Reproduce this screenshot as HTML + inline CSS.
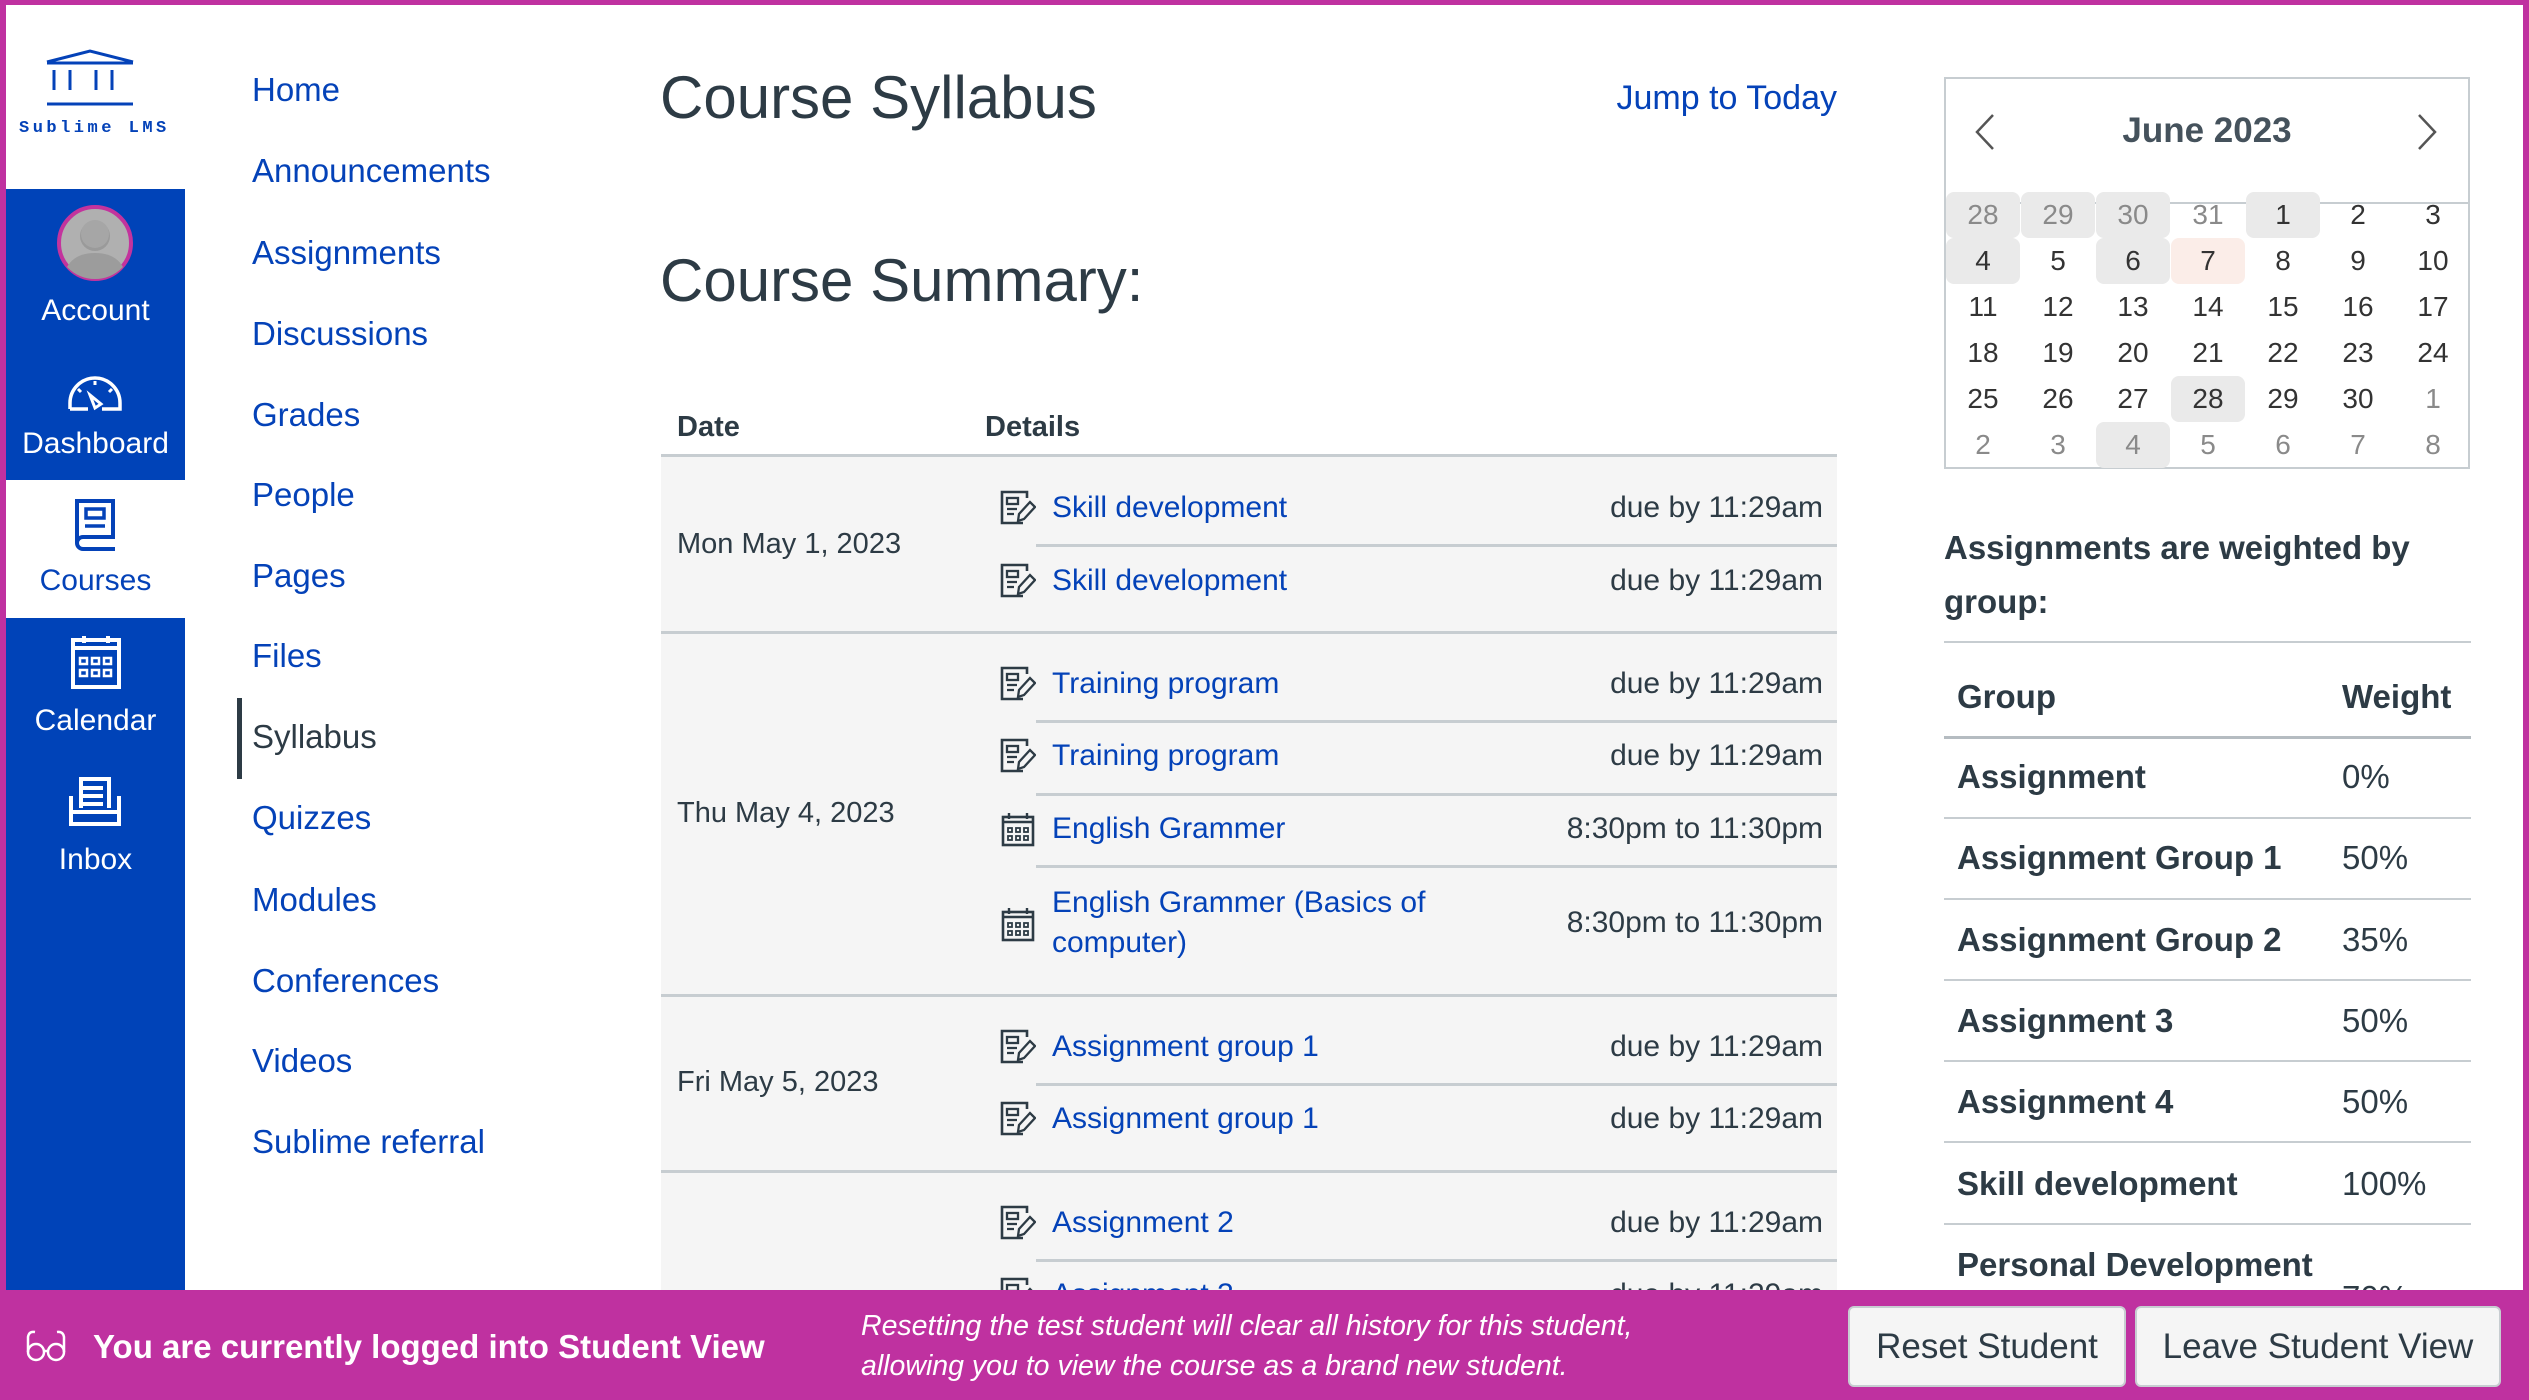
<!DOCTYPE html>
<html><head><meta charset="utf-8">
<style>
*{margin:0;padding:0;box-sizing:border-box}
body{width:2529px;height:1400px;position:relative;overflow:hidden;background:#fff;font-family:"Liberation Sans",sans-serif;color:#2D3B45}
.a{position:absolute;white-space:nowrap}
.c{position:absolute;white-space:nowrap;height:60px;line-height:60px}
.nav{color:#0442B8;font-size:33px;left:252px}
.lnk{color:#0442B8}
.grp{position:absolute;left:661px;width:1176px;background:#F5F5F5}
.sep{position:absolute;height:3px;background:#C7CDD1}
.ic{position:absolute;left:1000px;width:36px;height:36px}
.due{font-size:30px;right:706px;text-align:right}
.it{font-size:30px;left:1052px}
.dt{font-size:29px;left:677px}
.cal div{position:absolute;width:74px;height:46px;line-height:46px;text-align:center;font-size:28px;color:#333;border-radius:8px}
.cal .o{color:#8a8a8a}
.cal .h{background:#EAEAEA}
.wl{position:absolute;left:1944px;width:527px;height:2px;background:#C7CDD1}
.wn{font-size:33px;font-weight:bold;left:1957px;color:#2D3B45}
.wv{font-size:33px;left:2342px;color:#2D3B45}
.rail{color:#fff;font-size:30px;left:6px;width:179px;text-align:center}
.btn{position:absolute;top:1306px;height:81px;background:#F5F5F5;border:2px solid #C7CDD1;border-radius:6px;font-size:35px;line-height:77px;text-align:center;color:#2D3B45}
</style></head><body>
<div class="a" style="left:0;top:0;width:2529px;height:5px;background:#BF31A0"></div>
<div class="a" style="left:0;top:0;width:6px;height:1400px;background:#BF31A0"></div>
<div class="a" style="right:0;top:0;width:6px;height:1400px;background:#BF31A0"></div>

<div class="a" style="left:6px;top:189px;width:179px;height:291px;background:#0043B8"></div>
<div class="a" style="left:6px;top:618px;width:179px;height:672px;background:#0043B8"></div>
<svg class="a" style="left:40px;top:48px" width="100" height="62" viewBox="0 0 100 62">
<path d="M7 14 L50 3 L93 14 M7 15 H93" stroke="#0442B8" stroke-width="3" fill="none"/>
<path d="M14 22 V42 M30 22 V42 M56 22 V42 M72 22 V42 M7 56 H93" stroke="#0442B8" stroke-width="3" fill="none"/>
</svg>
<div class="a" style="left:19px;top:119px;font-size:17px;font-weight:bold;color:#0442B8;letter-spacing:3.5px;font-family:'Liberation Mono',monospace">Sublime LMS</div>
<svg class="a" style="left:55px;top:203px" width="80" height="80" viewBox="0 0 80 80">
<circle cx="40" cy="40" r="36" fill="#B0B0B0" stroke="#C3339D" stroke-width="4"/>
<circle cx="40" cy="33" r="15" fill="#9a9a9a"/><circle cx="40" cy="31" r="14" fill="#A6A6A6"/>
<path d="M12 64 Q20 50 40 50 Q60 50 68 64 Q56 76 40 76 Q24 76 12 64Z" fill="#9c9c9c"/>
</svg>
<div class="c rail" style="top:281px">Account</div>
<svg class="a" style="left:66px;top:373px" width="58" height="40" viewBox="0 0 58 40">
<path d="M4 36 V30 A25 25 0 0 1 54 30 V36 H36 M22 36 H4" stroke="#fff" stroke-width="3.5" fill="none"/>
<path d="M24 22 L29 35 L35 31Z" stroke="#fff" stroke-width="3" fill="none"/>
<path d="M29 8 V12 M12 16 L15 19 M46 16 L43 19" stroke="#fff" stroke-width="3"/>
</svg>
<div class="c rail" style="top:414px">Dashboard</div>
<svg class="a" style="left:73px;top:497px" width="44" height="56" viewBox="0 0 44 56">
<path d="M4 46 V4 H40 V40 H10 A5 5 0 0 0 10 52 H42" stroke="#0442B8" stroke-width="4" fill="none"/>
<rect x="13" y="12" width="18" height="9" stroke="#0442B8" stroke-width="3.5" fill="none"/><path d="M12 29 H32" stroke="#0442B8" stroke-width="3.5"/>
</svg>
<div class="c rail" style="top:551px;color:#0442B8">Courses</div>
<svg class="a" style="left:70px;top:634px" width="52" height="56" viewBox="0 0 52 56">
<rect x="3" y="6" width="46" height="47" stroke="#fff" stroke-width="4" fill="none"/><path d="M3 14 H49 M14 2 V9 M38 2 V9" stroke="#fff" stroke-width="4"/>
<g fill="none" stroke="#fff" stroke-width="2.5"><rect x="10" y="24" width="7" height="6"/><rect x="22" y="24" width="7" height="6"/><rect x="34" y="24" width="7" height="6"/><rect x="10" y="36" width="7" height="6"/><rect x="22" y="36" width="7" height="6"/><rect x="34" y="36" width="7" height="6"/></g>
</svg>
<div class="c rail" style="top:691px">Calendar</div>
<svg class="a" style="left:67px;top:776px" width="56" height="54" viewBox="0 0 56 54">
<path d="M14 32 V3 H42 V32 M14 12 H36 M14 20 H36 M14 28 H36" stroke="#fff" stroke-width="4" fill="none"/>
<path d="M4 20 V48 H52 V20 M4 36 H52" stroke="#fff" stroke-width="4" fill="none"/>
</svg>
<div class="c rail" style="top:830px">Inbox</div>

<div class="c nav" style="top:60px">Home</div>
<div class="c nav" style="top:141px">Announcements</div>
<div class="c nav" style="top:223px">Assignments</div>
<div class="c nav" style="top:304px">Discussions</div>
<div class="c nav" style="top:385px">Grades</div>
<div class="c nav" style="top:465px">People</div>
<div class="c nav" style="top:546px">Pages</div>
<div class="c nav" style="top:626px">Files</div>
<div class="a" style="left:237px;top:698px;width:5px;height:81px;background:#2D3B45"></div>
<div class="c nav" style="top:707px;color:#2D3B45">Syllabus</div>
<div class="c nav" style="top:788px">Quizzes</div>
<div class="c nav" style="top:870px">Modules</div>
<div class="c nav" style="top:951px">Conferences</div>
<div class="c nav" style="top:1031px">Videos</div>
<div class="c nav" style="top:1112px">Sublime referral</div>

<div class="a" style="left:660px;top:62px;font-size:60px;line-height:72px">Course Syllabus</div>
<div class="a lnk" style="right:692px;top:78px;font-size:34px;line-height:40px">Jump to Today</div>
<div class="a" style="left:660px;top:245px;font-size:60px;line-height:72px">Course Summary:</div>
<div class="c" style="left:677px;top:397px;font-size:29px;font-weight:bold">Date</div>
<div class="c" style="left:985px;top:397px;font-size:29px;font-weight:bold">Details</div>
<div class="sep" style="left:661px;top:454px;width:1176px"></div>

<div class="grp" style="top:457px;height:175px"></div>
<div class="grp" style="top:634px;height:361px"></div>
<div class="grp" style="top:997px;height:174px"></div>
<div class="grp" style="top:1173px;height:117px"></div>
<div class="sep" style="left:661px;top:631px;width:1176px"></div>
<div class="sep" style="left:661px;top:994px;width:1176px"></div>
<div class="sep" style="left:661px;top:1170px;width:1176px"></div>
<div class="sep" style="left:1036px;top:544px;width:801px"></div>
<div class="sep" style="left:1036px;top:720px;width:801px"></div>
<div class="sep" style="left:1036px;top:793px;width:801px"></div>
<div class="sep" style="left:1036px;top:865px;width:801px"></div>
<div class="sep" style="left:1036px;top:1083px;width:801px"></div>
<div class="sep" style="left:1036px;top:1259px;width:801px"></div>

<svg width="0" height="0" style="position:absolute"><defs>
<symbol id="as" viewBox="0 0 36 36"><path d="M23 33 H2 V2 H27 V8" stroke="#2D3B45" stroke-width="2.6" fill="none"/><rect x="7" y="8" width="11" height="6" stroke="#2D3B45" stroke-width="2.3" fill="none"/><path d="M7 19 H17 M7 24 H14" stroke="#2D3B45" stroke-width="2.3"/><path d="M18 31 L19 24 L30 12 L35 17 L24 29 Z" stroke="#2D3B45" stroke-width="2.3" fill="none"/></symbol>
<symbol id="ca" viewBox="0 0 36 36"><rect x="3" y="6" width="30" height="28" stroke="#2D3B45" stroke-width="2.6" fill="none"/><path d="M3 11 H33 M9 2 V8 M27 2 V8" stroke="#2D3B45" stroke-width="2.4"/><g fill="none" stroke="#2D3B45" stroke-width="1.8"><rect x="8" y="17" width="4" height="4"/><rect x="16" y="17" width="4" height="4"/><rect x="24" y="17" width="4" height="4"/><rect x="8" y="25" width="4" height="4"/><rect x="16" y="25" width="4" height="4"/><rect x="24" y="25" width="4" height="4"/></g></symbol>
</defs></svg>

<div class="c dt" style="top:514px">Mon May 1, 2023</div>
<div class="c dt" style="top:783px">Thu May 4, 2023</div>
<div class="c dt" style="top:1052px">Fri May 5, 2023</div>

<svg class="ic" style="top:490px"><use href="#as"/></svg><div class="c it lnk" style="top:478px">Skill development</div><div class="c due" style="top:478px">due by 11:29am</div>
<svg class="ic" style="top:563px"><use href="#as"/></svg><div class="c it lnk" style="top:551px">Skill development</div><div class="c due" style="top:551px">due by 11:29am</div>
<svg class="ic" style="top:666px"><use href="#as"/></svg><div class="c it lnk" style="top:654px">Training program</div><div class="c due" style="top:654px">due by 11:29am</div>
<svg class="ic" style="top:738px"><use href="#as"/></svg><div class="c it lnk" style="top:726px">Training program</div><div class="c due" style="top:726px">due by 11:29am</div>
<svg class="ic" style="top:811px"><use href="#ca"/></svg><div class="c it lnk" style="top:799px">English Grammer</div><div class="c due" style="top:799px">8:30pm to 11:30pm</div>
<svg class="ic" style="top:906px"><use href="#ca"/></svg><div class="c it lnk" style="top:873px">English Grammer (Basics of</div><div class="c it lnk" style="top:913px">computer)</div><div class="c due" style="top:893px">8:30pm to 11:30pm</div>
<svg class="ic" style="top:1029px"><use href="#as"/></svg><div class="c it lnk" style="top:1017px">Assignment group 1</div><div class="c due" style="top:1017px">due by 11:29am</div>
<svg class="ic" style="top:1101px"><use href="#as"/></svg><div class="c it lnk" style="top:1089px">Assignment group 1</div><div class="c due" style="top:1089px">due by 11:29am</div>
<svg class="ic" style="top:1205px"><use href="#as"/></svg><div class="c it lnk" style="top:1193px">Assignment 2</div><div class="c due" style="top:1193px">due by 11:29am</div>
<svg class="ic" style="top:1277px"><use href="#as"/></svg><div class="c it lnk" style="top:1265px">Assignment 3</div><div class="c due" style="top:1265px">due by 11:29am</div>

<div class="a" style="left:1944px;top:77px;width:526px;height:392px;border:2px solid #C7CDD1"></div>
<div class="a" style="left:1945px;top:202px;width:524px;height:2px;background:#C7CDD1"></div>
<svg class="a" style="left:1974px;top:113px" width="22" height="38" viewBox="0 0 22 38"><path d="M19 2 L3 19 L19 36" stroke="#555" stroke-width="2.5" fill="none"/></svg>
<svg class="a" style="left:2416px;top:113px" width="22" height="38" viewBox="0 0 22 38"><path d="M3 2 L19 19 L3 36" stroke="#555" stroke-width="2.5" fill="none"/></svg>
<div class="c" style="left:1945px;width:524px;text-align:center;top:101px;font-size:35px;font-weight:bold;color:#45525C">June 2023</div>
<div class="cal">
<div class="o h" style="left:1946px;top:192px">28</div><div class="o h" style="left:2021px;top:192px">29</div><div class="o h" style="left:2096px;top:192px">30</div><div class="o" style="left:2171px;top:192px">31</div><div class="h" style="left:2246px;top:192px">1</div><div style="left:2321px;top:192px">2</div><div style="left:2396px;top:192px">3</div>
<div class="h" style="left:1946px;top:238px">4</div><div style="left:2021px;top:238px">5</div><div class="h" style="left:2096px;top:238px">6</div><div style="left:2171px;top:238px;background:#FBEDE8">7</div><div style="left:2246px;top:238px">8</div><div style="left:2321px;top:238px">9</div><div style="left:2396px;top:238px">10</div>
<div style="left:1946px;top:284px">11</div><div style="left:2021px;top:284px">12</div><div style="left:2096px;top:284px">13</div><div style="left:2171px;top:284px">14</div><div style="left:2246px;top:284px">15</div><div style="left:2321px;top:284px">16</div><div style="left:2396px;top:284px">17</div>
<div style="left:1946px;top:330px">18</div><div style="left:2021px;top:330px">19</div><div style="left:2096px;top:330px">20</div><div style="left:2171px;top:330px">21</div><div style="left:2246px;top:330px">22</div><div style="left:2321px;top:330px">23</div><div style="left:2396px;top:330px">24</div>
<div style="left:1946px;top:376px">25</div><div style="left:2021px;top:376px">26</div><div style="left:2096px;top:376px">27</div><div class="h" style="left:2171px;top:376px">28</div><div style="left:2246px;top:376px">29</div><div style="left:2321px;top:376px">30</div><div class="o" style="left:2396px;top:376px">1</div>
<div class="o" style="left:1946px;top:422px">2</div><div class="o" style="left:2021px;top:422px">3</div><div class="o h" style="left:2096px;top:422px">4</div><div class="o" style="left:2171px;top:422px">5</div><div class="o" style="left:2246px;top:422px">6</div><div class="o" style="left:2321px;top:422px">7</div><div class="o" style="left:2396px;top:422px">8</div>
</div>

<div class="c" style="left:1944px;top:518px;font-size:33px;font-weight:bold">Assignments are weighted by</div>
<div class="c" style="left:1944px;top:572px;font-size:33px;font-weight:bold">group:</div>
<div class="wl" style="top:641px"></div>
<div class="c wn" style="top:667px">Group</div><div class="c wn" style="top:667px;left:2342px">Weight</div>
<div class="wl" style="top:736px;height:3px;background:#B5BCC1"></div>
<div class="c wn" style="top:747px">Assignment</div><div class="c wv" style="top:747px">0%</div>
<div class="wl" style="top:817px"></div>
<div class="c wn" style="top:828px">Assignment Group 1</div><div class="c wv" style="top:828px">50%</div>
<div class="wl" style="top:898px"></div>
<div class="c wn" style="top:910px">Assignment Group 2</div><div class="c wv" style="top:910px">35%</div>
<div class="wl" style="top:979px"></div>
<div class="c wn" style="top:991px">Assignment 3</div><div class="c wv" style="top:991px">50%</div>
<div class="wl" style="top:1060px"></div>
<div class="c wn" style="top:1072px">Assignment 4</div><div class="c wv" style="top:1072px">50%</div>
<div class="wl" style="top:1141px"></div>
<div class="c wn" style="top:1154px">Skill development</div><div class="c wv" style="top:1154px">100%</div>
<div class="wl" style="top:1223px"></div>
<div class="c wn" style="top:1235px">Personal Development</div><div class="c wv" style="top:1268px">70%</div>

<div class="a" style="left:0;top:1290px;width:2529px;height:110px;background:#BF31A0"></div>
<svg class="a" style="left:26px;top:1329px" width="40" height="34" viewBox="0 0 40 34"><g stroke="#fff" stroke-width="2.5" fill="none"><circle cx="10" cy="23" r="8"/><circle cx="30" cy="23" r="8"/><path d="M2 23 V8 Q3 2 9 3 M38 23 V8 Q37 2 31 3 M18 22 H22"/></g></svg>
<div class="c" style="left:93px;top:1317px;font-size:33px;font-weight:bold;color:#fff">You are currently logged into Student View</div>
<div class="c" style="left:861px;top:1296px;font-size:28.5px;font-style:italic;color:#fff">Resetting the test student will clear all history for this student,</div>
<div class="c" style="left:861px;top:1336px;font-size:28.5px;font-style:italic;color:#fff">allowing you to view the course as a brand new student.</div>
<div class="btn" style="left:1848px;width:278px">Reset Student</div>
<div class="btn" style="left:2135px;width:366px">Leave Student View</div>
</body></html>
